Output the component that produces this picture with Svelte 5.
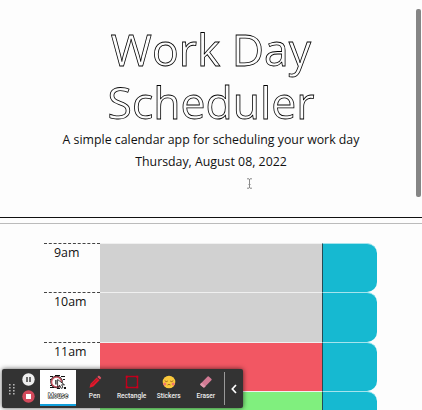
<script>
  const rows = [
    { hour: '9am', state: 'past' },
    { hour: '10am', state: 'past' },
    { hour: '11am', state: 'present' },
    { hour: '12pm', state: 'future' }
  ];
</script>

<div class="page">
  <header>
    <h1>Work Day<br />Scheduler</h1>
    <p class="lead">A simple calendar app for scheduling your work day</p>
    <p class="date">Thursday, August 08, 2022</p>
  </header>
  <div class="rule"></div>

  <main>
    {#each rows as row}
      <div class="row">
        <div class="hour">{row.hour}</div>
        <div class="block {row.state}"></div>
        <div class="save"></div>
      </div>
    {/each}
  </main>

  <div class="scroll"></div>

  <svg class="cursor" width="7" height="11" viewBox="0 0 7 11" fill="none" stroke="#8a8a8a">
    <path d="M1 .8H3L3.5 1.3L4 .8H6M3.5 1V10M1 10.2H3L3.5 9.7L4 10.2H6M2.5 6.5H4.5" />
  </svg>

  <div class="toolbar">
    <svg class="grip" width="6" height="11" viewBox="0 0 6 11" fill="#b5b5b5">
      <path d="M0 0h1.6v1.6H0zM4 0h1.6v1.6H4zM0 3h1.6v1.6H0zM4 3h1.6v1.6H4zM0 6h1.6v1.6H0zM4 6h1.6v1.6H4zM0 9h1.6v1.6H0zM4 9h1.6v1.6H4z" />
    </svg>
    <div class="controls">
      <svg width="13" height="13" viewBox="0 0 13 13">
        <circle cx="6.5" cy="6.5" r="6.2" fill="#eee" />
        <path d="M5 4V9M8 4V9" stroke="#333" stroke-width="1.4" />
      </svg>
      <svg width="13" height="13" viewBox="0 0 13 13">
        <circle cx="6.5" cy="6.5" r="6.2" fill="#d34a5c" />
        <rect x="4" y="4" width="5" height="5" fill="#fff" />
      </svg>
    </div>
    <div class="tool mouse">
      <svg width="18" height="15" viewBox="0 0 18 15">
        <path d="M1 1h3v1H1zM6 0h5v1H6zM12 1h4v1h-4zM1 4h2v1H1zM1 10h3v1H1zM1 12h4v1H1zM14 4h2v1h-2zM15 12h2v2h-2zM8 13h3v1H8z" fill="#111" />
        <circle cx="7.5" cy="7" r="5.6" fill="#fff" stroke="#111" stroke-width="1.2" />
        <circle cx="7.5" cy="7" r="5" fill="none" stroke="#c65562" stroke-width="1.5" />
        <path d="M8.6 4.5V12L10.7 10.3L12.2 13.4L14 12.5L12.6 9.8H15.5Z" fill="#fff" stroke="#111" stroke-width=".8" />
        <path d="M6.3 5h1.2v4.5H6.3z" fill="#111" />
      </svg>
      <span>Mouse</span>
    </div>
    <div class="tool">
      <svg width="14" height="14" viewBox="0 0 14 14">
        <path d="M1.5 12.7L2.5 8.7L8.7 2.5L11.5 5.3L5.3 11.5Z" fill="#e3192c" />
        <path d="M9.3 1.9L10.4 .8Q11 .5 11.6 1L13 2.4Q13.4 3 12.9 3.6L12 4.6Z" fill="#d65362" />
        <path d="M4 9.5L9 4.5" stroke="#8e1722" stroke-width=".8" />
      </svg>
      <span>Pen</span>
    </div>
    <div class="tool">
      <svg width="14" height="14" viewBox="0 0 14 14" fill="none">
        <rect x="1.5" y="1.5" width="11" height="11" stroke="#c0001b" stroke-width="1.4" />
        <path d="M.8 .8h2v2h-2zM11.2 .8h2v2h-2zM.8 11.2h2v2h-2zM11.2 11.2h2v2h-2z" fill="#c80020" />
      </svg>
      <span>Rectangle</span>
    </div>
    <div class="tool">
      <svg width="14" height="14" viewBox="0 0 14 14">
        <circle cx="7" cy="7" r="6.3" fill="#fac93c" />
        <circle cx="2.8" cy="9" r="1.6" fill="#f4786a" />
        <circle cx="11.2" cy="9" r="1.6" fill="#f4786a" />
        <path d="M2.7 5.7Q4.3 7.4 5.8 6M8.2 6Q9.7 7.4 11.3 5.7M5.5 10Q7 8.7 8.5 10" fill="none" stroke="#8a5520" stroke-width=".8" />
      </svg>
      <span>Stickers</span>
    </div>
    <div class="tool">
      <svg width="14" height="14" viewBox="0 0 14 14">
        <path d="M1.3 9L8.6 1.6Q9.2 1 9.8 1.5L12.5 4Q13 4.6 12.4 5.2L5.3 12.4Q4.7 12.8 4.1 12.3L1.4 10Q1 9.5 1.3 9Z" fill="#d27a94" />
        <path d="M1.3 9L2.6 7.7L6.6 11.2L5.3 12.4Q4.7 12.8 4.1 12.3L1.4 10Z" fill="#dd99ab" />
      </svg>
      <span>Eraser</span>
    </div>
    <div class="collapse">
      <svg width="6" height="10" viewBox="0 0 6 10" fill="none" stroke="#fff" stroke-width="1.7"><path d="M5 1L1.3 5L5 9" /></svg>
    </div>
  </div>
</div>

<style>
  .page {
    position: relative;
    width: 422px;
    height: 410px;
    overflow: hidden;
    background: #fdfdfd;
    font-family: "Open Sans", sans-serif;
    color: #111;
  }
  header {
    box-sizing: border-box;
    height: 218px;
    padding-top: 22px;
    border-bottom: 1px solid #111;
    text-align: center;
  }
  h1 {
    margin: 0 0 1px;
    font-size: 44.5px;
    line-height: 53px;
    font-weight: 400;
    color: #fdfdfd;
    -webkit-text-stroke: .8px #000;
    will-change: opacity, transform;
  }
  p { margin: 0; white-space: nowrap; font-size: 12.33px; line-height: 22px; }
  .rule { height: 5px; border-bottom: 1px solid #bbb; }
  main { padding: 19px 44px 0 44px; }
  .row { display: flex; height: 49.4px; }
  .hour {
    box-sizing: border-box;
    flex: none;
    width: 56px;
    padding-left: 10px;
    border-top: 1px dashed #444;
    font-size: 12.4px;
    line-height: 17px;
  }
  .block {
    box-sizing: border-box;
    flex: none;
    width: 222px;
    border-top: 1px solid #f0f0f0;
  }
  .past { background: #d1d1d1; }
  .present { background: #f25763; }
  .future { background: #80ef7e; }
  .save {
    box-sizing: border-box;
    flex: none;
    width: 55px;
    border-left: 1px solid #264b54;
    border-top: 1px solid #a5e4ed;
    border-radius: 0 10px 10px 0;
    background: #16b9d1;
  }
  .scroll {
    position: absolute;
    left: 416px;
    top: 9px;
    width: 5px;
    height: 188px;
    border-radius: 2px;
    background: #858585;
  }
  .cursor { position: absolute; left: 246px; top: 178px; }
  .toolbar {
    position: absolute;
    left: 2px;
    top: 369px;
    display: flex;
    width: 241px;
    height: 39px;
    border-radius: 2px;
    background: #333;
    box-shadow: 0 0 5px rgba(0, 0, 0, .65);
    color: #eee;
    font-family: Roboto, sans-serif;
  }
  .grip { margin: 15px 0 0 7px; flex: none; }
  .controls {
    display: flex;
    flex: none;
    flex-direction: column;
    gap: 4px;
    width: 13px;
    margin: 4px 5px 0 7px;
  }
  .tool {
    display: flex;
    flex: none;
    flex-direction: column;
    align-items: center;
    box-sizing: border-box;
    width: 37.1px;
    padding-top: 6px;
  }
  .tool svg { flex: none; }
  .tool span { margin-top: 3px; font-size: 6.6px; line-height: 8px; font-weight: 500; white-space: nowrap; }
  .mouse { width: 36px; height: 36px; margin-top: 1px; background: #fff; color: #fff; border-bottom: 2px solid #12a0dc; padding-top: 5px; }
  .mouse span { margin-top: 2px; -webkit-text-stroke: 1px #111; paint-order: stroke fill; }
  .collapse {
    display: flex;
    align-items: center;
    justify-content: center;
    flex: 1;
    height: 33px;
    margin-top: 3px;
    border-left: 1px solid #999;
  }
</style>
